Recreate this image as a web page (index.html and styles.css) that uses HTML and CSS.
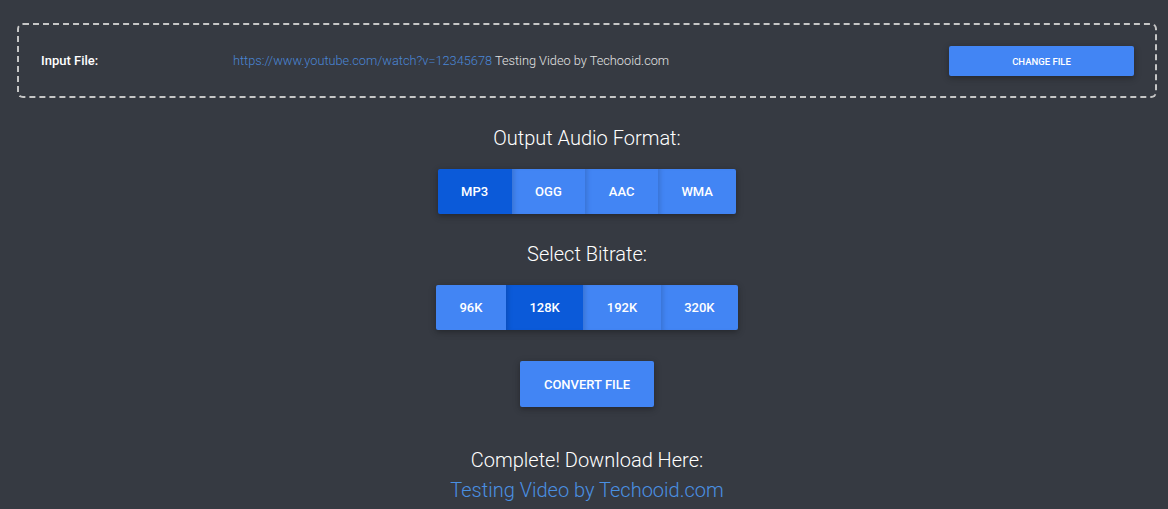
FILE: index.html
```html
<!DOCTYPE html>
<html lang="en">
<head>
<meta charset="utf-8">
<title>Audio Converter</title>
<link rel="stylesheet" href="styles.css">
</head>
<body>
<section class="input-box">
  <div class="input-label">Input File:</div>
  <div class="input-value"><span class="url">https://www.youtube.com/watch?v=12345678</span> Testing Video by Techooid.com</div>
  <button class="btn btn-small">Change File</button>
</section>

<main class="converter">
  <h2 class="heading heading-format">Output Audio Format:</h2>
  <div class="btn-group">
    <button class="btn btn-seg active">MP3</button>
    <button class="btn btn-seg">OGG</button>
    <button class="btn btn-seg">AAC</button>
    <button class="btn btn-seg">WMA</button>
  </div>

  <h2 class="heading heading-bitrate">Select Bitrate:</h2>
  <div class="btn-group">
    <button class="btn btn-seg">96K</button>
    <button class="btn btn-seg active">128K</button>
    <button class="btn btn-seg">192K</button>
    <button class="btn btn-seg">320K</button>
  </div>

  <button class="btn btn-convert">Convert File</button>

  <p class="complete">Complete! Download Here:</p>
  <a class="download" href="#">Testing Video by Techooid.com</a>
</main>
</body>
</html>
```

FILE: styles.css
```css
* { box-sizing: border-box; }

html, body {
  margin: 0;
  padding: 0;
  background: #363a42;
  font-family: Roboto, "Liberation Sans", Arial, sans-serif;
  color: #ffffff;
}

.input-box {
  margin: 23px 11px 0 17px;
  height: 75px;
  border: 2px dashed #c6c6c6;
  border-radius: 6px;
  display: flex;
  align-items: center;
  padding: 0 21px 0 22px;
}

.input-label {
  width: 192px;
  font-size: 13px;
  font-weight: 500;
  color: #ffffff;
  flex: none;
}

.input-value {
  flex: 1;
  font-size: 12.75px;
  font-weight: 300;
  color: #e4e4e4;
  white-space: nowrap;
}

.url { color: #4a86d6; }

.btn {
  font-family: Roboto, "Liberation Sans", Arial, sans-serif;
  border: none;
  background: #4285f4;
  color: #ffffff;
  font-weight: 500;
  text-transform: uppercase;
  cursor: pointer;
  border-radius: 2px;
  box-shadow: 0 2px 5px rgba(0, 0, 0, 0.22), 0 2px 10px rgba(0, 0, 0, 0.12);
}

.btn-small {
  width: 185px;
  height: 30px;
  font-size: 9.5px;
  flex: none;
  margin-top: 1px;
}

.converter {
  margin: 0 11px 0 17px;
  display: flex;
  flex-direction: column;
  align-items: center;
}

.heading {
  margin: 28px 0 0;
  font-size: 20px;
  line-height: 24px;
  font-weight: 300;
  color: #ffffff;
}

.btn-group {
  display: flex;
  margin-top: 19px;
  border-radius: 2px;
  box-shadow: 0 2px 5px rgba(0, 0, 0, 0.22), 0 2px 10px rgba(0, 0, 0, 0.12);
}

.btn-seg {
  height: 45px;
  padding: 0 23.5px;
  font-size: 13px;
  border-radius: 0;
  box-shadow: inset 5px 0 5px -3px rgba(0, 0, 0, 0.14);
}

.btn-seg:first-child {
  border-radius: 2px 0 0 2px;
  box-shadow: none;
}

.btn-seg:last-child { border-radius: 0 2px 2px 0; }

.btn-seg.active { background: #0b5ad9; }

.btn-convert {
  margin-top: 31px;
  height: 46px;
  padding: 0 24px;
  font-size: 13px;
}

.complete {
  margin: 38px 0 0;
  font-size: 20px;
  line-height: 30px;
  font-weight: 300;
  color: #ffffff;
}

.download {
  font-size: 20px;
  line-height: 30px;
  font-weight: 300;
  color: #4a90e2;
  text-decoration: none;
}
```
